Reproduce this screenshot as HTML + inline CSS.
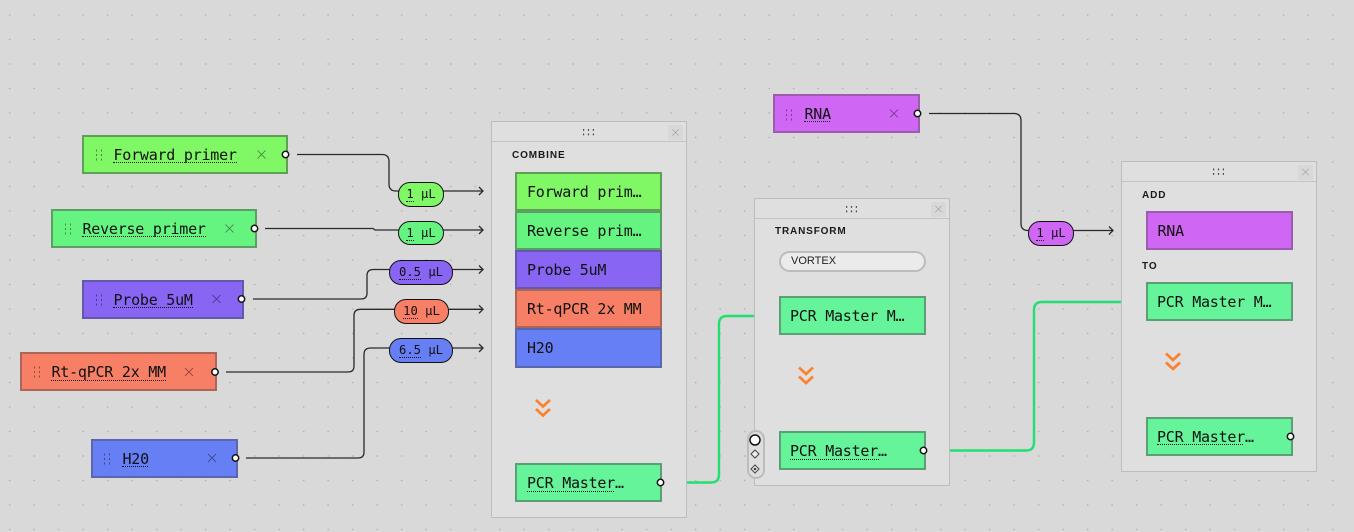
<!DOCTYPE html>
<html>
<head>
<meta charset="utf-8">
<style>
html,body{margin:0;padding:0;width:1354px;height:532px;overflow:hidden}
body{position:relative;background-color:#d9d9d9;background-image:radial-gradient(circle at 1px 1px,#b2b2b2 0,#b2b2b2 .6px,transparent 1px);background-size:24.5px 24.5px;background-position:8.7px 14px;font-family:"DejaVu Sans Mono","Liberation Mono",monospace;color:#111}
.n{position:absolute;box-sizing:border-box;height:39px;border:2px solid;font-size:15px;line-height:37px;white-space:pre;letter-spacing:-.23px}
.n span{position:absolute;top:0;height:27px;line-height:37px;margin-left:-.5px}
.d{position:absolute;z-index:2;height:0;border-bottom:1px dotted #111}
.p{position:absolute;box-sizing:border-box;background:#dfdfdf;border:1.5px solid #bdbdbd}
.p i{position:absolute;left:0;right:0;top:19px;height:0;border-top:1.5px solid #c4c4c4}
.p b{position:absolute;right:3px;top:3px;width:15px;height:15px;background:#d8d8d8}
.l{position:absolute;font:bold 10px/12px "Liberation Sans",sans-serif;letter-spacing:.9px;color:#1a1a1a}
.pill{position:absolute;z-index:2;box-sizing:border-box;height:24.5px;border:1.3px solid #111;border-radius:12px;font-size:12.2px;line-height:23.5px;text-align:center;white-space:pre}
.pill s{text-decoration:none;border-bottom:1px dotted #111;display:inline-block;line-height:14px}
.fw{background:#80f765;border-color:#5f9f58}
.rv{background:#66f480;border-color:#5c9e66}
.pb{background:#8965f4;border-color:#625aa8}
.rt{background:#f67f65;border-color:#ab6658}
.h2{background:#667ff4;border-color:#5a66ae}
.pc{background:#66f49b;border-color:#5c9e76}
.rn{background:#cf66f4;border-color:#9b5cae}
svg{position:absolute;left:0;top:0}
</style>
</head>
<body>

<svg width="1354" height="532" style="z-index:1">
<g fill="none" stroke="#2a2a2a" stroke-width="1.3">
<path d="M297 154.500H382Q389 154.500 389 161.500V184Q389 191 396 191H483"/>
<path d="M265 228.500H373L375 230H483"/>
<path d="M253 299H361Q367 299 367 293V275.500Q367 269.500 373.500 269.500H483"/>
<path d="M226 372H348Q354 372 354 366V315.500Q354 309.300 360.500 309.300H483"/>
<path d="M246 458H358Q364 458 364 452V354.500Q364 348 370.500 348H483"/>
<path d="M929 113.500H1014Q1021 113.500 1021 120.500V223.500Q1021 230.500 1028 230.500H1113"/>
<path d="M479 187L483 191L479 195M479 226L483 230L479 234M479 265.500L483 269.500L479 273.500M479 305.300L483 309.300L479 313.300M479 344L483 348L479 352M1109 226.500L1113 230.500L1109 234.500"/>
</g>
<g fill="none" stroke="#22e06f" stroke-width="2.400">
<path d="M686 482.500H711Q719 482.500 719 474.500V324Q719 316 727 316H755"/>
<path d="M949 450.500H1026Q1034 450.500 1034 442.500V310Q1034 302 1042 302H1122"/>
</g>
</svg>

<div class="p" style="left:491px;top:121px;width:196px;height:397px;z-index:1"><i></i><b></b></div>
<div class="p" style="left:754px;top:198px;width:196px;height:288px;z-index:1"><i></i><b></b></div>
<div class="p" style="left:1121px;top:161px;width:196px;height:311px;z-index:1"><i></i><b></b></div>

<div style="position:absolute;left:0;top:0;width:1354px;height:532px;z-index:2">
<div class="l" style="left:512px;top:149.500px">COMBINE</div>
<div class="l" style="left:775px;top:226px;letter-spacing:.85px">TRANSFORM</div>
<div class="l" style="left:1142px;top:189.500px">ADD</div>
<div class="l" style="left:1142px;top:260.500px">TO</div>

<!-- source nodes -->
<div class="n fw" style="left:82px;top:135px;width:206px"><span style="left:30px">Forward primer</span></div>
<div class="d" style="left:113px;top:162px;width:124px"></div>
<div class="n rv" style="left:51px;top:209px;width:206px"><span style="left:30px">Reverse primer</span></div>
<div class="d" style="left:82px;top:236px;width:124px"></div>
<div class="n pb" style="left:82px;top:280px;width:162px"><span style="left:30px">Probe 5uM</span></div>
<div class="d" style="left:113px;top:307px;width:80px"></div>
<div class="n rt" style="left:20px;top:352px;width:197px"><span style="left:30px">Rt-qPCR 2x MM</span></div>
<div class="d" style="left:51px;top:380px;width:115px"></div>
<div class="n h2" style="left:91px;top:439px;width:147px"><span style="left:30px">H20</span></div>
<div class="d" style="left:122px;top:466px;width:26px"></div>
<div class="n rn" style="left:773px;top:94px;width:147px"><span style="left:30px">RNA</span></div>
<div class="d" style="left:804px;top:121px;width:26px;border-bottom-width:1.5px"></div>

<!-- combine items -->
<div class="n fw" style="left:515px;top:172px;width:147px"><span style="left:10.500px">Forward prim…</span></div>
<div class="n rv" style="left:515px;top:211px;width:147px"><span style="left:10.500px">Reverse prim…</span></div>
<div class="n pb" style="left:515px;top:250px;width:147px"><span style="left:10.500px">Probe 5uM</span></div>
<div class="n rt" style="left:515px;top:289px;width:147px"><span style="left:10.500px">Rt-qPCR 2x MM</span></div>
<div class="n h2" style="left:515px;top:328px;width:147px;height:40px"><span style="left:10.500px">H20</span></div>
<div class="n pc" style="left:515px;top:463px;width:147px"><span style="left:10.500px">PCR Master…</span></div>
<div class="d" style="left:527px;top:491px;width:87px"></div>

<!-- transform items -->
<div style="position:absolute;box-sizing:border-box;left:779px;top:251px;width:147px;height:21px;background:#ebebeb;border:2px solid #bcbcbc;border-radius:11px;font:11px/17px 'Liberation Sans',sans-serif;padding-left:10px;color:#222">VORTEX</div>
<div class="n pc" style="left:779px;top:296px;width:147px"><span style="left:9.500px">PCR Master M…</span></div>
<div class="n pc" style="left:779px;top:431px;width:147px"><span style="left:9.500px">PCR Master…</span></div>
<div class="d" style="left:790px;top:459px;width:89px"></div>

<!-- add items -->
<div class="n rn" style="left:1146px;top:211px;width:147px"><span style="left:10px">RNA</span></div>
<div class="n pc" style="left:1146px;top:282px;width:147px"><span style="left:9.500px">PCR Master M…</span></div>
<div class="n pc" style="left:1146px;top:417px;width:147px"><span style="left:9.500px">PCR Master…</span></div>
<div class="d" style="left:1157px;top:444px;width:86px;border-bottom-width:1.5px"></div>

<!-- pills -->
<div class="pill fw" style="left:398px;top:182px;width:46px;border-color:#111"><s>1</s> µL</div>
<div class="pill rv" style="left:398px;top:221px;width:46px;border-color:#111;height:23.500px;line-height:22.500px"><s>1</s> µL</div>
<div class="pill pb" style="left:389px;top:260px;width:64px;border-color:#111"><s>0.5</s> µL</div>
<div class="pill rt" style="left:394px;top:299px;width:55px;border-color:#111"><s>10</s> µL</div>
<div class="pill h2" style="left:389px;top:338px;width:64px;border-color:#111"><s>6.5</s> µL</div>
<div class="pill rn" style="left:1028px;top:221px;width:46px;border-color:#111"><s>1</s> µL</div>

<!-- side switch -->
<div style="position:absolute;box-sizing:border-box;left:746.500px;top:430px;width:18px;height:49px;background:#dedede;border:2px solid #bcbcbc;border-radius:9px"></div>
</div>

<svg width="1354" height="532" style="z-index:3">
<defs>
<g id="x" fill="none" stroke-width=".8"><path d="M-4-4L4 4M4-4L-4 4"/></g>
<g id="h" fill="currentColor"><rect x="-3" y="-5.500" width="1" height="2"/><rect x="2" y="-5.500" width="1" height="2"/><rect x="-3" y="-1" width="1" height="2"/><rect x="2" y="-1" width="1" height="2"/><rect x="-3" y="3.500" width="1" height="2"/><rect x="2" y="3.500" width="1" height="2"/></g>
<g id="t" fill="#444"><rect x="-5.500" y="-3" width="1.200" height="1.800"/><rect x="-.6" y="-3" width="1.200" height="1.800"/><rect x="4.300" y="-3" width="1.200" height="1.800"/><rect x="-5.500" y="1.500" width="1.200" height="1.800"/><rect x="-.6" y="1.500" width="1.200" height="1.800"/><rect x="4.300" y="1.500" width="1.200" height="1.800"/></g>
<g id="c" fill="none" stroke="#fb8230" stroke-width="2.800"><path d="M-7 .5L0 7L7 .5M-7 9.500L0 16L7 9.500"/></g>
</defs>

<!-- handles -->
<use href="#h" x="99" y="155" style="color:#3d8a3a"/>
<use href="#h" x="68" y="229" style="color:#3d8a4a"/>
<use href="#h" x="99" y="300" style="color:#453a8a"/>
<use href="#h" x="37" y="372" style="color:#8a4a3a"/>
<use href="#h" x="107" y="459" style="color:#3a4a8a"/>
<use href="#h" x="789" y="115" style="color:#7a3a8a"/>

<!-- node x marks -->
<use href="#x" x="261.500" y="154.500" stroke="#3d7a36"/>
<use href="#x" x="229.500" y="228.500" stroke="#3d7a48"/>
<use href="#x" x="216.500" y="299" stroke="#3f3280"/>
<use href="#x" x="189" y="372" stroke="#80402f"/>
<use href="#x" x="212" y="458" stroke="#324080"/>
<use href="#x" x="894" y="113.500" stroke="#6e3280"/>

<!-- panel headers -->
<use href="#t" x="588.500" y="132"/>
<use href="#t" x="851.500" y="209"/>
<use href="#t" x="1218.500" y="171.500"/>
<g transform="translate(675.500 132.500) scale(.8)"><use href="#x" stroke="#999"/></g>
<g transform="translate(938.500 209) scale(.8)"><use href="#x" stroke="#999"/></g>
<g transform="translate(1305.500 172) scale(.8)"><use href="#x" stroke="#999"/></g>

<!-- chevrons -->
<use href="#c" x="543" y="399.500"/>
<use href="#c" x="806" y="367"/>
<use href="#c" x="1173" y="353"/>

<!-- ports -->
<g fill="#fff" stroke="#111" stroke-width="1.500">
<circle cx="285.500" cy="154.500" r="3.200"/>
<circle cx="254.500" cy="228.500" r="3.200"/>
<circle cx="241.500" cy="299" r="3.200"/>
<circle cx="215" cy="372" r="3.200"/>
<circle cx="235.500" cy="458" r="3.200"/>
<circle cx="917.500" cy="113.500" r="3.200"/>
<circle cx="660.500" cy="482.500" r="3.200"/>
<circle cx="923.500" cy="450.500" r="3.200"/>
<circle cx="1290.500" cy="436.500" r="3.200"/>
</g>

<!-- side switch icons -->
<circle cx="755" cy="440" r="5" fill="#fff" stroke="#111" stroke-width="1.500"/>
<path d="M755 450L759 454L755 458L751 454Z" fill="#eee" stroke="#444" stroke-width="1"/>
<path d="M755 465L759 469L755 473L751 469Z" fill="#eee" stroke="#444" stroke-width="1"/>
<circle cx="755" cy="469" r="1.300" fill="#444"/>
</svg>

</body>
</html>
